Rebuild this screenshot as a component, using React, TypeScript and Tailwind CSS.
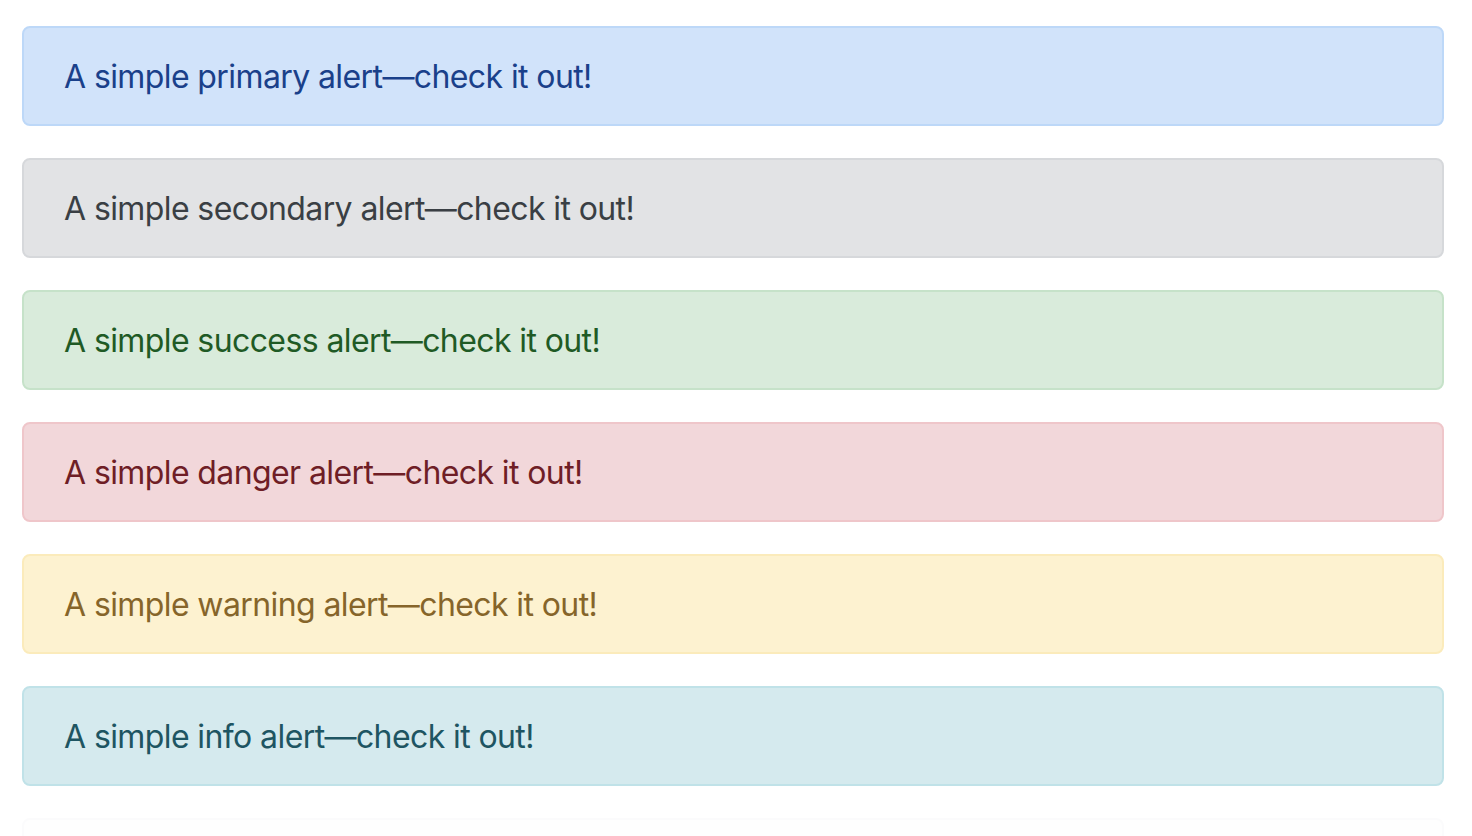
const ALERTS = [
  { name: "primary", box: "bg-[#d1e3fa] border-[#bdd8f8] text-[#1a408a]" },
  { name: "secondary", box: "bg-[#e2e3e5] border-[#d6d8db] text-[#3a3f44]" },
  { name: "success", box: "bg-[#d9ebdb] border-[#c6e2c9] text-[#1f5a25]" },
  { name: "danger", box: "bg-[#f2d7da] border-[#efc6ca] text-[#6f1e26]" },
  { name: "warning", box: "bg-[#fdf2d0] border-[#fbebbb] text-[#86652a]" },
  { name: "info", box: "bg-[#d5eaee] border-[#c0e2e8] text-[#1e5562]" },
  { name: "light", box: "bg-[#fefefe] border-[#fbfbfc] text-[#818182]" },
];

export default function App() {
  return (
    <div className="min-h-screen bg-white pl-[22px] pr-[28px] pt-[26px] font-['Inter',sans-serif]">
      {ALERTS.map((a) => (
        <div
          key={a.name}
          role="alert"
          className={`mb-8 rounded-lg border-2 px-10 pt-[25px] pb-[23px] text-[32px] leading-[48px] tracking-[-0.6px] ${a.box}`}
        >
          A simple {a.name} alert—check it out!
        </div>
      ))}
    </div>
  );
}
